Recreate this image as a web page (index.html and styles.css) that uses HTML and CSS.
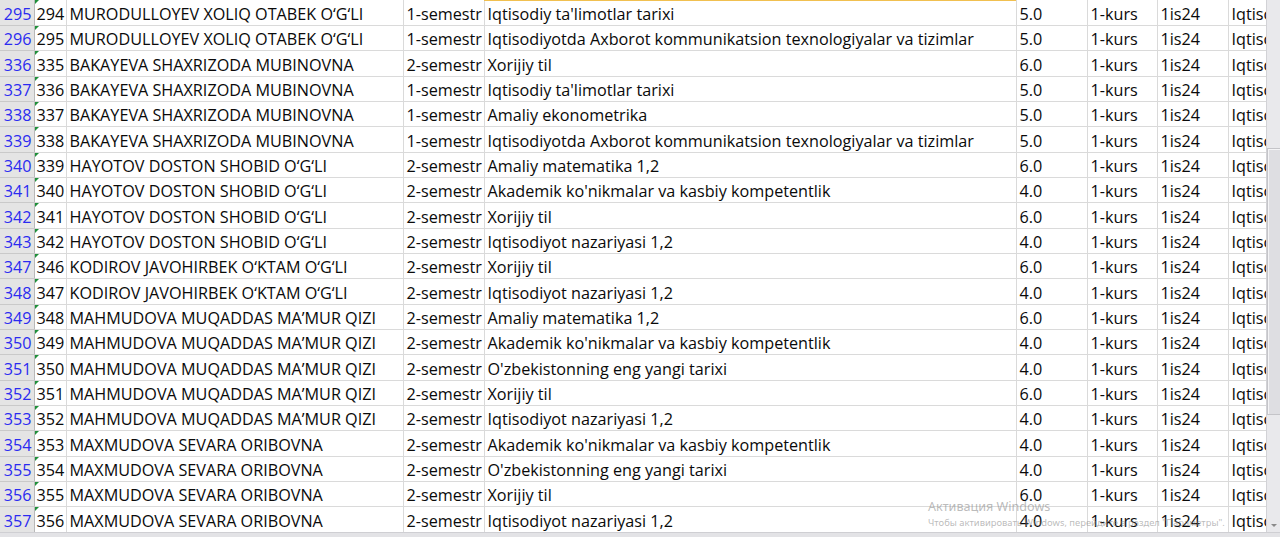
FILE: index.html
```html
<!DOCTYPE html>
<html lang="uz">
<head>
<meta charset="utf-8">
<title>Sheet</title>
<link rel="stylesheet" href="styles.css">
</head>
<body>
<div class="app">
  <div class="main">
    <div class="sheet">
      <div class="sel-line"></div>
      <table class="grid">
        <colgroup>
          <col class="c-hdr"><col class="c-a"><col class="c-b"><col class="c-c"><col class="c-d"><col class="c-e"><col class="c-f"><col class="c-g"><col class="c-h">
        </colgroup>
        <tbody>
          <tr><th>295</th><td class="num">294</td><td>MURODULLOYEV XOLIQ OTABEK O‘G‘LI</td><td>1-semestr</td><td>Iqtisodiy ta'limotlar tarixi</td><td>5.0</td><td>1-kurs</td><td>1is24</td><td>Iqtisodiyot</td></tr>
          <tr><th>296</th><td class="num">295</td><td>MURODULLOYEV XOLIQ OTABEK O‘G‘LI</td><td>1-semestr</td><td>Iqtisodiyotda Axborot kommunikatsion texnologiyalar va tizimlar</td><td>5.0</td><td>1-kurs</td><td>1is24</td><td>Iqtisodiyot</td></tr>
          <tr><th>336</th><td class="num">335</td><td>BAKAYEVA SHAXRIZODA MUBINOVNA</td><td>2-semestr</td><td>Xorijiy til</td><td>6.0</td><td>1-kurs</td><td>1is24</td><td>Iqtisodiyot</td></tr>
          <tr><th>337</th><td class="num">336</td><td>BAKAYEVA SHAXRIZODA MUBINOVNA</td><td>1-semestr</td><td>Iqtisodiy ta'limotlar tarixi</td><td>5.0</td><td>1-kurs</td><td>1is24</td><td>Iqtisodiyot</td></tr>
          <tr><th>338</th><td class="num">337</td><td>BAKAYEVA SHAXRIZODA MUBINOVNA</td><td>1-semestr</td><td>Amaliy ekonometrika</td><td>5.0</td><td>1-kurs</td><td>1is24</td><td>Iqtisodiyot</td></tr>
          <tr><th>339</th><td class="num">338</td><td>BAKAYEVA SHAXRIZODA MUBINOVNA</td><td>1-semestr</td><td>Iqtisodiyotda Axborot kommunikatsion texnologiyalar va tizimlar</td><td>5.0</td><td>1-kurs</td><td>1is24</td><td>Iqtisodiyot</td></tr>
          <tr><th>340</th><td class="num">339</td><td>HAYOTOV DOSTON SHOBID O‘G‘LI</td><td>2-semestr</td><td>Amaliy matematika 1,2</td><td>6.0</td><td>1-kurs</td><td>1is24</td><td>Iqtisodiyot</td></tr>
          <tr><th>341</th><td class="num">340</td><td>HAYOTOV DOSTON SHOBID O‘G‘LI</td><td>2-semestr</td><td>Akademik ko'nikmalar va kasbiy kompetentlik</td><td>4.0</td><td>1-kurs</td><td>1is24</td><td>Iqtisodiyot</td></tr>
          <tr><th>342</th><td class="num">341</td><td>HAYOTOV DOSTON SHOBID O‘G‘LI</td><td>2-semestr</td><td>Xorijiy til</td><td>6.0</td><td>1-kurs</td><td>1is24</td><td>Iqtisodiyot</td></tr>
          <tr><th>343</th><td class="num">342</td><td>HAYOTOV DOSTON SHOBID O‘G‘LI</td><td>2-semestr</td><td>Iqtisodiyot nazariyasi 1,2</td><td>4.0</td><td>1-kurs</td><td>1is24</td><td>Iqtisodiyot</td></tr>
          <tr><th>347</th><td class="num">346</td><td>KODIROV JAVOHIRBEK O‘KTAM O‘G‘LI</td><td>2-semestr</td><td>Xorijiy til</td><td>6.0</td><td>1-kurs</td><td>1is24</td><td>Iqtisodiyot</td></tr>
          <tr><th>348</th><td class="num">347</td><td>KODIROV JAVOHIRBEK O‘KTAM O‘G‘LI</td><td>2-semestr</td><td>Iqtisodiyot nazariyasi 1,2</td><td>4.0</td><td>1-kurs</td><td>1is24</td><td>Iqtisodiyot</td></tr>
          <tr><th>349</th><td class="num">348</td><td>MAHMUDOVA MUQADDAS MA’MUR QIZI</td><td>2-semestr</td><td>Amaliy matematika 1,2</td><td>6.0</td><td>1-kurs</td><td>1is24</td><td>Iqtisodiyot</td></tr>
          <tr><th>350</th><td class="num">349</td><td>MAHMUDOVA MUQADDAS MA’MUR QIZI</td><td>2-semestr</td><td>Akademik ko'nikmalar va kasbiy kompetentlik</td><td>4.0</td><td>1-kurs</td><td>1is24</td><td>Iqtisodiyot</td></tr>
          <tr><th>351</th><td class="num">350</td><td>MAHMUDOVA MUQADDAS MA’MUR QIZI</td><td>2-semestr</td><td>O'zbekistonning eng yangi tarixi</td><td>4.0</td><td>1-kurs</td><td>1is24</td><td>Iqtisodiyot</td></tr>
          <tr><th>352</th><td class="num">351</td><td>MAHMUDOVA MUQADDAS MA’MUR QIZI</td><td>2-semestr</td><td>Xorijiy til</td><td>6.0</td><td>1-kurs</td><td>1is24</td><td>Iqtisodiyot</td></tr>
          <tr><th>353</th><td class="num">352</td><td>MAHMUDOVA MUQADDAS MA’MUR QIZI</td><td>2-semestr</td><td>Iqtisodiyot nazariyasi 1,2</td><td>4.0</td><td>1-kurs</td><td>1is24</td><td>Iqtisodiyot</td></tr>
          <tr><th>354</th><td class="num">353</td><td>MAXMUDOVA SEVARA ORIBOVNA</td><td>2-semestr</td><td>Akademik ko'nikmalar va kasbiy kompetentlik</td><td>4.0</td><td>1-kurs</td><td>1is24</td><td>Iqtisodiyot</td></tr>
          <tr><th>355</th><td class="num">354</td><td>MAXMUDOVA SEVARA ORIBOVNA</td><td>2-semestr</td><td>O'zbekistonning eng yangi tarixi</td><td>4.0</td><td>1-kurs</td><td>1is24</td><td>Iqtisodiyot</td></tr>
          <tr><th>356</th><td class="num">355</td><td>MAXMUDOVA SEVARA ORIBOVNA</td><td>2-semestr</td><td>Xorijiy til</td><td>6.0</td><td>1-kurs</td><td>1is24</td><td>Iqtisodiyot</td></tr>
          <tr><th>357</th><td class="num">356</td><td>MAXMUDOVA SEVARA ORIBOVNA</td><td>2-semestr</td><td>Iqtisodiyot nazariyasi 1,2</td><td>4.0</td><td>1-kurs</td><td>1is24</td><td>Iqtisodiyot</td></tr>
          <tr><th>358</th><td class="num">357</td><td></td><td></td><td></td><td></td><td></td><td></td><td></td></tr>
        </tbody>
      </table>
    </div>
    <div class="vscroll">
      <div class="track">
        <div class="thumb"></div>
      </div>
      <div class="arrow-down"></div>
    </div>
  </div>
  <div class="hbar"></div>
</div>
<div class="watermark">
  <div class="wm-title">Активация Windows</div>
  <div class="wm-text">Чтобы активировать Windows, перейдите в раздел "Параметры".</div>
</div>
</body>
</html>
```
FILE: styles.css
```css
html, body {
  margin: 0;
  padding: 0;
  width: 1280px;
  height: 537px;
  overflow: hidden;
  background: #fff;
}

.app {
  display: flex;
  flex-direction: column;
  height: 537px;
}

.main {
  display: flex;
  height: 533px;
  overflow: hidden;
}

.sheet {
  position: relative;
  width: 1267px;
  overflow: hidden;
}

.sel-line {
  position: absolute;
  left: 484px;
  top: 0;
  width: 532px;
  height: 1px;
  background: #f1c050;
  z-index: 2;
}

.grid {
  border-collapse: collapse;
  table-layout: fixed;
  width: 1267px;
  font-family: "Open Sans", Lato, "Liberation Sans", sans-serif;
  font-size: 16.2px;
  color: #0a0a0a;
}

.c-hdr { width: 34px; }
.c-a { width: 32px; }
.c-b { width: 337px; }
.c-c { width: 81px; }
.c-d { width: 532px; }
.c-e { width: 71px; }
.c-f { width: 70px; }
.c-g { width: 71px; }
.c-h { width: 39px; }

.grid tr {
  height: 25.35px;
}

.grid th,
.grid td {
  padding: 0 0 0 3px;
  height: 25.35px;
  box-sizing: border-box;
  white-space: nowrap;
  overflow: hidden;
  vertical-align: bottom;
  line-height: 21px;
  border-right: 1px solid #dadada;
  border-bottom: 1px solid #dadada;
  font-weight: normal;
  text-align: left;
}

.grid th {
  background: #e4e4e4;
  color: #2b2bf0;
  text-align: right;
  padding: 0 2px 0 0;
  border-right: 1px solid #b9b9b9;
  border-bottom: 1px solid #c9c9c9;
}

.grid td.num {
  position: relative;
  padding-left: 2px;
}

.grid td.num::before {
  content: "";
  position: absolute;
  left: 0;
  top: 0;
  width: 0;
  height: 0;
  border-top: 4px solid #1f8f3a;
  border-right: 4px solid transparent;
}

.vscroll {
  width: 13px;
  display: flex;
  flex-direction: column;
  background: #e9e9ec;
  border-left: 1px solid #d2d2d6;
}

.track {
  flex: 1;
  padding-top: 148px;
}

.thumb {
  height: 267px;
  background: #dedee2;
  border: 1px solid #c4c4c8;
  border-right: none;
  box-sizing: border-box;
  box-shadow: inset 1px 1px 0 #f4f4f6;
}

.arrow-down {
  height: 14px;
  display: flex;
  align-items: center;
  justify-content: center;
}

.arrow-down::before {
  content: "";
  width: 0;
  height: 0;
  border-left: 3px solid transparent;
  border-right: 3px solid transparent;
  border-top: 3px solid #8a8a8a;
}

.hbar {
  height: 4px;
  background: #e3e3e6;
  border-top: 1px solid #cfcfd3;
}

.watermark {
  position: absolute;
  left: 928px;
  top: 498px;
  font-family: "Noto Sans", "Open Sans", sans-serif;
  color: rgba(130, 130, 130, 0.55);
  pointer-events: none;
}

.wm-title {
  font-size: 12.6px;
  line-height: 18px;
}

.wm-text {
  font-size: 9.4px;
  line-height: 13px;
  white-space: nowrap;
}
```
